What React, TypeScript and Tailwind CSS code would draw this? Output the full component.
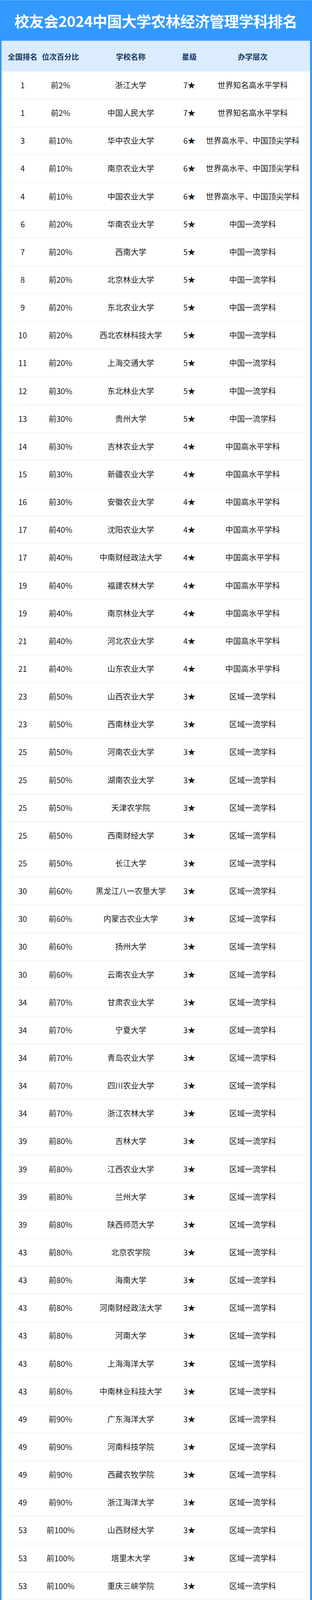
import React from "react";

type Row = [string, string, string, string, string];

const W1 = "世界知名高水平学科";
const W2 = "世界高水平、中国顶尖学科";
const C1 = "中国一流学科";
const C2 = "中国高水平学科";
const R1 = "区域一流学科";

const rows: Row[] = [
  ["1", "前2%", "浙江大学", "7★", W1],
  ["1", "前2%", "中国人民大学", "7★", W1],
  ["3", "前10%", "华中农业大学", "6★", W2],
  ["4", "前10%", "南京农业大学", "6★", W2],
  ["4", "前10%", "中国农业大学", "6★", W2],
  ["6", "前20%", "华南农业大学", "5★", C1],
  ["7", "前20%", "西南大学", "5★", C1],
  ["8", "前20%", "北京林业大学", "5★", C1],
  ["9", "前20%", "东北农业大学", "5★", C1],
  ["10", "前20%", "西北农林科技大学", "5★", C1],
  ["11", "前20%", "上海交通大学", "5★", C1],
  ["12", "前30%", "东北林业大学", "5★", C1],
  ["13", "前30%", "贵州大学", "5★", C1],
  ["14", "前30%", "吉林农业大学", "4★", C2],
  ["15", "前30%", "新疆农业大学", "4★", C2],
  ["16", "前30%", "安徽农业大学", "4★", C2],
  ["17", "前40%", "沈阳农业大学", "4★", C2],
  ["17", "前40%", "中南财经政法大学", "4★", C2],
  ["19", "前40%", "福建农林大学", "4★", C2],
  ["19", "前40%", "南京林业大学", "4★", C2],
  ["21", "前40%", "河北农业大学", "4★", C2],
  ["21", "前40%", "山东农业大学", "4★", C2],
  ["23", "前50%", "山西农业大学", "3★", R1],
  ["23", "前50%", "西南林业大学", "3★", R1],
  ["25", "前50%", "河南农业大学", "3★", R1],
  ["25", "前50%", "湖南农业大学", "3★", R1],
  ["25", "前50%", "天津农学院", "3★", R1],
  ["25", "前50%", "西南财经大学", "3★", R1],
  ["25", "前50%", "长江大学", "3★", R1],
  ["30", "前60%", "黑龙江八一农垦大学", "3★", R1],
  ["30", "前60%", "内蒙古农业大学", "3★", R1],
  ["30", "前60%", "扬州大学", "3★", R1],
  ["30", "前60%", "云南农业大学", "3★", R1],
  ["34", "前70%", "甘肃农业大学", "3★", R1],
  ["34", "前70%", "宁夏大学", "3★", R1],
  ["34", "前70%", "青岛农业大学", "3★", R1],
  ["34", "前70%", "四川农业大学", "3★", R1],
  ["34", "前70%", "浙江农林大学", "3★", R1],
  ["39", "前80%", "吉林大学", "3★", R1],
  ["39", "前80%", "江西农业大学", "3★", R1],
  ["39", "前80%", "兰州大学", "3★", R1],
  ["39", "前80%", "陕西师范大学", "3★", R1],
  ["43", "前80%", "北京农学院", "3★", R1],
  ["43", "前80%", "海南大学", "3★", R1],
  ["43", "前80%", "河南财经政法大学", "3★", R1],
  ["43", "前80%", "河南大学", "3★", R1],
  ["43", "前80%", "上海海洋大学", "3★", R1],
  ["43", "前80%", "中南林业科技大学", "3★", R1],
  ["49", "前90%", "广东海洋大学", "3★", R1],
  ["49", "前90%", "河南科技学院", "3★", R1],
  ["49", "前90%", "西藏农牧学院", "3★", R1],
  ["49", "前90%", "浙江海洋大学", "3★", R1],
  ["53", "前100%", "山西财经大学", "3★", R1],
  ["53", "前100%", "塔里木大学", "3★", R1],
  ["53", "前100%", "重庆三峡学院", "3★", R1],
];

// column widths measured off the reference, relative to the row's left padding
const grid = "grid grid-cols-[11.4%_13.7%_32.9%_6%_36%] items-center text-center";

export default function App() {
  return (
    <div
      className="w-full h-screen overflow-hidden flex flex-col bg-white border-l-4 border-r-[5px] border-[#3399ff]"
      style={{ fontFamily: '"Noto Sans CJK SC", "Noto Sans", sans-serif' }}
    >
      {/* title */}
      <div className="h-[104px] shrink-0 bg-[#3399ff] border-t border-[#7fbcff] flex items-center justify-center">
        <h1 className="text-[38px] font-bold text-white leading-none tracking-[-0.5px] whitespace-nowrap">
          校友会2024中国大学农林经济管理学科排名
        </h1>
      </div>

      {/* header */}
      <div className={`${grid} h-[79px] shrink-0 bg-[#dcecff] border-t border-[#a8d1ff] pl-[10px] pr-[8px] text-[19px] leading-none font-bold text-[#143763]`}>
        <div>全国排名</div>
        <div>位次百分比</div>
        <div>学校名称</div>
        <div>星级</div>
        <div>办学层次</div>
      </div>

      {/* rows */}
      <div className="flex-1 min-h-0 flex flex-col pl-[10px] pr-[8px]">
        {rows.map((r, i) => (
          <div key={i} className={`${grid} flex-1 min-h-0 border-b border-[#e8e8e8] text-[20px] leading-none text-[#1a1a1a]`}>
            <div>{r[0]}</div>
            <div>{r[1]}</div>
            <div className="whitespace-nowrap">{r[2]}</div>
            <div className="whitespace-nowrap">{r[3]}</div>
            <div className="whitespace-nowrap">{r[4]}</div>
          </div>
        ))}
      </div>
    </div>
  );
}
